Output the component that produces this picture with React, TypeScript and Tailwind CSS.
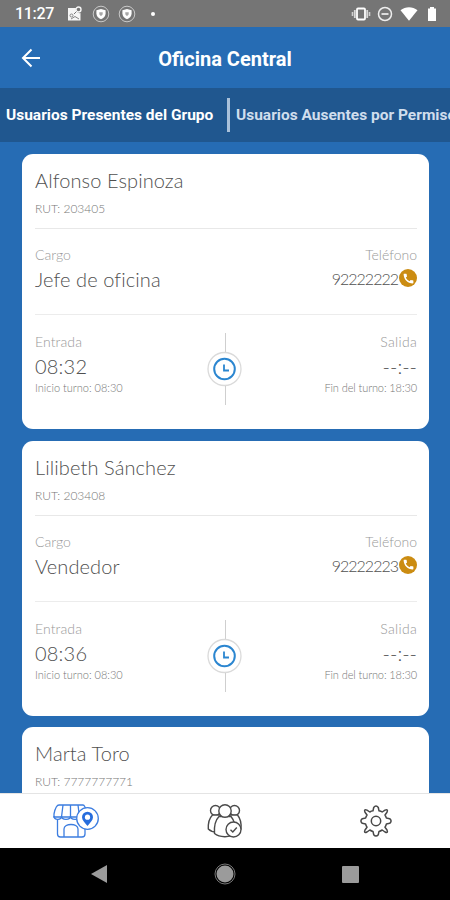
import { MdCall } from "react-icons/md";

interface IUser {
  name: string;
  rut: string;
  cargo?: string;
  phone?: string;
  entrada?: string;
}

const users: IUser[] = [
  { name: "Alfonso Espinoza", rut: "203405", cargo: "Jefe de oficina", phone: "92222222", entrada: "08:32" },
  { name: "Lilibeth Sánchez", rut: "203408", cargo: "Vendedor", phone: "92222223", entrada: "08:36" },
  { name: "Marta Toro", rut: "7777777771" },
];

function ShieldIcon() {
  return (
    <svg width="18" height="18" viewBox="0 0 18 18" fill="none">
      <circle cx="9" cy="9" r="7.8" stroke="#c8c8c8" strokeWidth="1" />
      <path d="M4.4 5.2L9 4l4.600 1.200v3.200c0 2.600-1.900 4.600-4.600 5.800-2.700-1.200-4.600-3.200-4.600-5.800z" fill="#fff" />
      <path d="M7.300 7.200h3.400v1.600c0 1-.7 1.700-1.700 2.200-1-.5-1.700-1.200-1.700-2.200z" fill="#a8a8a8" />
    </svg>
  );
}

function StatusBar() {
  return (
    <div className="flex h-[27px] shrink-0 items-center bg-[#757575] pl-[15px] pr-[13px] text-white">
      <span className="w-[52px] pt-px text-[16px] font-medium leading-none tracking-[-0.3px]">11:27</span>
      <svg width="16" height="16" viewBox="0 0 16 16" className="mr-[9px]">
        <path d="M1 2h8a3.800 3.800 0 0 0 4.500 5v7.500H1z" fill="#f5f5f5" />
        <circle cx="11.500" cy="3.500" r="2.500" fill="none" stroke="#f5f5f5" strokeWidth="1.400" />
        <path d="M9.500 5.500L7 8" stroke="#757575" strokeWidth="1" />
        <circle cx="4.500" cy="9.500" r="1.500" fill="none" stroke="#858585" strokeWidth="1" />
        <path d="M4 13l4-2.500 4 2.500" fill="none" stroke="#858585" strokeWidth="1" />
      </svg>
      <ShieldIcon />
      <span className="w-2" />
      <ShieldIcon />
      <span className="ml-[15px] size-1 rounded-full bg-white" />
      <div className="ml-auto flex items-center">
        <svg width="20" height="16" viewBox="0 0 20 16" className="mr-1.5">
          <rect x="6" y="2.500" width="8" height="11" rx="1" fill="#757575" stroke="#fff" strokeWidth="1.800" />
          <path d="M3.800 4v8M16.200 4v8" stroke="#d8d8d8" strokeWidth="1.800" />
          <path d="M1.500 6v4M18.500 6v4" stroke="#d0d0d0" strokeWidth="1.600" />
        </svg>
        <svg width="16" height="16" viewBox="0 0 16 16" className="mr-[7px]">
          <circle cx="8" cy="8" r="6.500" fill="none" stroke="#eee" strokeWidth="1.500" />
          <path d="M4.500 8h7" stroke="#eee" strokeWidth="1.700" />
        </svg>
        <svg width="18" height="14" viewBox="0 0 18 14" className="mr-[9px]">
          <path d="M.5 3.200C5.500-.8 12.500-.8 17.500 3.200L9 13.700z" fill="#fff" />
        </svg>
        <svg width="10" height="16" viewBox="0 0 10 16">
          <path d="M3 1h4v1.500h2v12.500H1V2.500h2z" fill="#fff" />
        </svg>
      </div>
    </div>
  );
}

function ClockIcon() {
  return (
    <div className="flex flex-col items-center">
      <span className="h-[19px] w-px bg-[#cfcfcf]" />
      <svg width="36" height="36" viewBox="0 0 36 36" fill="none" className="-my-px">
        <circle cx="17.500" cy="18" r="16.500" stroke="#dadada" strokeWidth="1.300" />
        <circle cx="17.500" cy="18" r="10.300" stroke="#2b86d0" strokeWidth="2" />
        <path d="M17 13.500v6h5" stroke="#2b86d0" strokeWidth="1.800" />
      </svg>
      <span className="h-[19px] w-px bg-[#cfcfcf]" />
    </div>
  );
}

function UserCard({ user }: { user: IUser }) {
  return (
    <div className="h-[275px] shrink-0 rounded-[11px] bg-white pl-[13px] pr-3 font-['Lato',sans-serif] font-light text-[#505050]">
      <div className="h-[75px] border-b border-[#e8e8e8] pt-3.5">
        <p className="text-[20px] leading-6 tracking-[0.1px]">{user.name}</p>
        <p className="mt-2 pt-px text-[12px] leading-4 text-[#777]">RUT: {user.rut}</p>
      </div>
      {user.cargo && (
        <div className="flex h-[86px] justify-between border-b border-[#ececec] pt-[18px]">
          <div>
            <p className="text-[14px] leading-4 text-[#999]">Cargo</p>
            <p className="mt-1 text-[20px] leading-6 tracking-[0.1px]">{user.cargo}</p>
          </div>
          <div className="text-right">
            <p className="text-[14px] leading-4 text-[#999]">Teléfono</p>
            <div className="mt-1 flex h-6 items-center justify-end">
              <span className="text-[16px] leading-6 tracking-[-1px]">{user.phone}</span>
              <span className="-mt-0.5 ml-px flex size-[18px] items-center justify-center rounded-full bg-[#cb8c12] text-white">
                <MdCall size={13} />
              </span>
            </div>
          </div>
        </div>
      )}
      {user.entrada && (
        <div className="flex justify-between pt-[18px]">
          <div className="w-[172px]">
            <p className="mt-px text-[14px] leading-4 tracking-[0.1px] text-[#999]">Entrada</p>
            <p className="mt-1 text-[20px] leading-6 tracking-[0.2px]">{user.entrada}</p>
            <p className="mt-0.5 text-[11px] leading-4 text-[#777]">Inicio turno: 08:30</p>
          </div>
          <ClockIcon />
          <div className="w-[174px] text-right">
            <p className="mt-px text-[14px] leading-4 tracking-[0.3px] text-[#999]">Salida</p>
            <p className="mt-1 text-[20px] leading-6">--:--</p>
            <p className="mt-0.5 text-[11px] leading-4 tracking-[-0.1px] text-[#777]">Fin del turno: 18:30</p>
          </div>
        </div>
      )}
    </div>
  );
}

function StoreIcon() {
  return (
    <svg width="48" height="36" viewBox="0 0 48 36" fill="none" stroke="#3c7de0" strokeWidth="1.300" className="ml-[3px]">
      <path d="M6 2h24c2 0 3 4 4 9v3H1v-3c1-5 2-9 5-9z" />
      <path d="M10 2L8.500 14M17.500 2v12M25 2l1.500 12" />
      <path d="M1 13c0 4.500 7.500 4.500 7.500 0 0 4.500 9 4.500 9 0 0 4.500 9 4.500 9 0" />
      <path d="M4.500 16.500V31c0 2 1 3 3 3H29c2 0 3-1 3-3v-6" />
      <path d="M11 34V26c0-6 14-6 14 0v8" />
      <circle cx="34.500" cy="15.500" r="10.800" fill="#fff" />
      <path d="M34.500 23c-2.500-3-5.500-6-5.500-8.800a5.500 5.500 0 0 1 11 0c0 2.800-3 5.800-5.500 8.800z" fill="#276ddd" stroke="none" />
      <circle cx="34.500" cy="14.200" r="2.600" fill="#fff" stroke="none" />
    </svg>
  );
}

function GroupIcon() {
  return (
    <svg width="36" height="36" viewBox="0 0 36 36" fill="#fff" stroke="#4a4a4a" strokeWidth="1.400">
      <circle cx="8.500" cy="7.500" r="5" />
      <circle cx="27.500" cy="7.500" r="5" />
      <path d="M5.500 12C2.500 15 1 20 1.300 26c2 2 5 3 8 3h17c3 0 5.500-1 7.700-3 .5-6-1-11-3.500-14z" />
      <path d="M12 13.500c-3.500 3.500-5 10-4.500 17 5 4 15 4.500 21 0C29 23 27 17 24 13.500z" />
      <circle cx="18" cy="8" r="6.200" />
      <circle cx="26.500" cy="26.500" r="7.500" />
      <path d="M23.500 26.700l2.300 2.300 4-4.500" fill="none" />
    </svg>
  );
}

function GearIcon() {
  return (
    <svg width="34" height="34" viewBox="0 0 34 34" fill="none" stroke="#484848" strokeWidth="1.500" strokeLinejoin="round" className="ml-px">
      <path d="M14.700 3.500Q17 .5 19.300 3.500L20 6.800Q22 7.200 23.200 8L26 6.100Q29.500 4.800 28 8.300L26 11Q27 12.500 27.400 14.100L30.700 14.700Q33.500 17 30.700 19.300L27.400 20Q27 21.600 26 23.200L28 26Q29.500 29.500 26 28L23.200 26Q21.600 27 20 27.400L19.300 30.700Q17 33.500 14.700 30.700L14 27.400Q12.400 27 10.800 26L8 28Q4.500 29.500 6 26L8 23.200Q7 21.600 6.600 20L3.300 19.300Q.5 17 3.300 14.700L6.600 14.100Q7 12.500 8 11L6 8.300Q4.500 4.800 8 6.100L10.800 8Q12.400 7 14 6.800z" />
      <circle cx="17" cy="17" r="4.700" />
    </svg>
  );
}

function App() {
  return (
    <div className="flex h-[900px] w-[450px] flex-col overflow-hidden bg-[#266cb4] font-['Roboto',sans-serif]">
      <StatusBar />

      <div className="grid h-[61px] shrink-0 grid-cols-[61px_1fr_61px] items-center text-white">
        <svg width="20" height="20" viewBox="0 0 20 20" fill="none" stroke="#fff" strokeWidth="2" className="ml-[21px]">
          <path d="M19 10H2.500M10.500 1.500L2 10l8.500 8.500" />
        </svg>
        <h1 className="pt-0.5 text-center text-[20px] font-bold">Oficina Central</h1>
      </div>

      <div className="flex h-[54px] shrink-0 items-center whitespace-nowrap bg-[#20578f] text-[15.500px] font-bold">
        <span className="w-[227px] shrink-0 pl-1.5 pt-0.5 text-white">Usuarios Presentes del Grupo</span>
        <span className="h-[34px] w-[3px] shrink-0 bg-[#a9c1da]" />
        <span className="pl-1.5 pt-0.5 text-[#d0deed]">Usuarios Ausentes por Permiso</span>
      </div>

      <div className="flex min-h-0 flex-1 flex-col gap-[11.500px] overflow-hidden pl-[22px] pr-[21px] pt-3">
        {users.map((user) => (
          <UserCard key={user.rut} user={user} />
        ))}
      </div>

      <div className="grid h-[55px] shrink-0 grid-cols-3 place-items-center border-t border-[#e4e4e4] bg-white">
        <StoreIcon />
        <GroupIcon />
        <GearIcon />
      </div>

      <div className="grid h-[52px] shrink-0 grid-cols-3 place-items-center bg-black">
        <svg width="18" height="20" viewBox="0 0 18 20" className="ml-12">
          <path d="M17 1v18L1 10z" fill="#9b9b9b" />
        </svg>
        <svg width="22" height="22" viewBox="0 0 22 22">
          <circle cx="11" cy="11" r="8.500" fill="#9b9b9b" />
          <circle cx="11" cy="11" r="10" fill="none" stroke="#777" strokeWidth="1" />
        </svg>
        <span className="mr-[50px] size-[17px] rounded-[1px] bg-[#9b9b9b]" />
      </div>
    </div>
  );
}

export default App;
